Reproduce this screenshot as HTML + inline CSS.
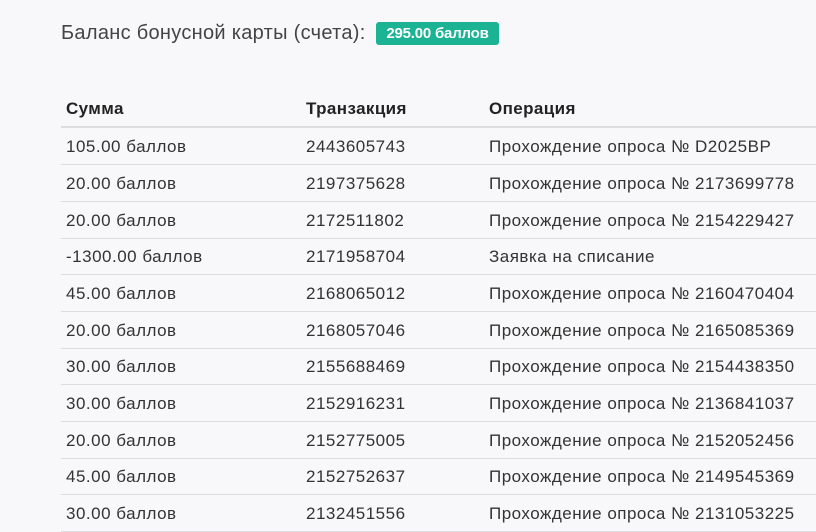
<!DOCTYPE html>
<html><head><meta charset="utf-8"><style>
body{margin:0;background:#f8f8fa;width:816px;height:528px;overflow:hidden;font-family:"Liberation Sans",sans-serif;color:#333;}
.bal{position:absolute;left:61px;top:22px;font-size:20px;color:#444;letter-spacing:0.3px;}
.badge{position:absolute;left:376px;top:22px;width:123px;height:23px;background:#1bb394;border-radius:3px;color:#fff;font-weight:bold;font-size:15px;line-height:23px;text-align:center;letter-spacing:-0.2px;}
.row{position:absolute;left:61px;width:760px;height:36px;border-bottom:1px solid #ddd;font-size:17px;letter-spacing:0.5px;}
.row span{position:absolute;top:9px;white-space:nowrap;}
.a{left:5px}.b{left:245px}.c{left:428px}
.h{font-weight:bold;border-bottom:2px solid #ddd;color:#222;letter-spacing:0.4px}
</style></head><body>
<div class="bal">Баланс бонусной карты (счета):</div>
<div class="badge">295.00 баллов</div>
<div class="row h" style="top:90px;height:36px"><span class="a" style="top:9px">Сумма</span><span class="b" style="top:9px">Транзакция</span><span class="c" style="top:9px">Операция</span></div>
<div class="row" style="top:128px"><span class="a">105.00 баллов</span><span class="b">2443605743</span><span class="c">Прохождение опроса № D2025BP</span></div>
<div class="row" style="top:165px"><span class="a">20.00 баллов</span><span class="b">2197375628</span><span class="c">Прохождение опроса № 2173699778</span></div>
<div class="row" style="top:202px"><span class="a">20.00 баллов</span><span class="b">2172511802</span><span class="c">Прохождение опроса № 2154229427</span></div>
<div class="row" style="top:238px"><span class="a">-1300.00 баллов</span><span class="b">2171958704</span><span class="c">Заявка на списание</span></div>
<div class="row" style="top:275px"><span class="a">45.00 баллов</span><span class="b">2168065012</span><span class="c">Прохождение опроса № 2160470404</span></div>
<div class="row" style="top:312px"><span class="a">20.00 баллов</span><span class="b">2168057046</span><span class="c">Прохождение опроса № 2165085369</span></div>
<div class="row" style="top:348px"><span class="a">30.00 баллов</span><span class="b">2155688469</span><span class="c">Прохождение опроса № 2154438350</span></div>
<div class="row" style="top:385px"><span class="a">30.00 баллов</span><span class="b">2152916231</span><span class="c">Прохождение опроса № 2136841037</span></div>
<div class="row" style="top:422px"><span class="a">20.00 баллов</span><span class="b">2152775005</span><span class="c">Прохождение опроса № 2152052456</span></div>
<div class="row" style="top:458px"><span class="a">45.00 баллов</span><span class="b">2152752637</span><span class="c">Прохождение опроса № 2149545369</span></div>
<div class="row" style="top:495px"><span class="a">30.00 баллов</span><span class="b">2132451556</span><span class="c">Прохождение опроса № 2131053225</span></div>
</body></html>
